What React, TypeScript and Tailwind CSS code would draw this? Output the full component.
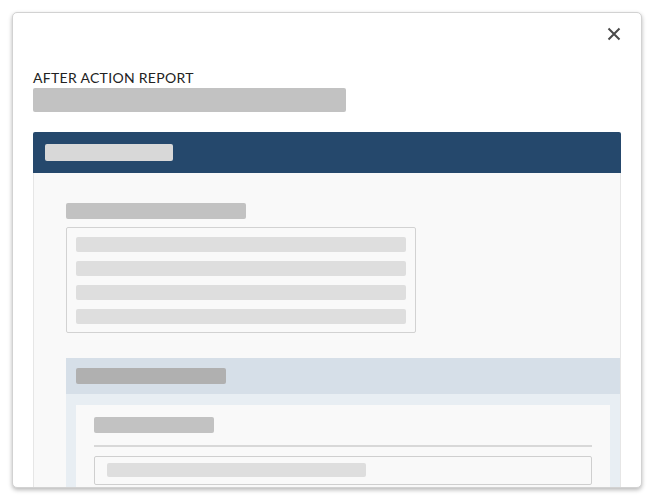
import React from "react";

export default function App() {
  return (
    <div className="w-[655px] h-[498px] bg-white pt-[12px] pl-[12px]" style={{ fontFamily: "Lato, 'Noto Sans', sans-serif" }}>
      <div className="relative w-[630px] h-[476px] rounded-[5px] border border-[#d2d2d2] bg-white shadow-[0_2px_4px_rgba(0,0,0,0.28)] overflow-hidden">
        <button className="absolute top-[13px] right-[19px] w-[16px] h-[16px] flex items-center justify-center">
          <svg width="14" height="14" viewBox="0 0 14 14">
            <path d="M1.5 1.5 L12.5 12.5 M12.5 1.5 L1.5 12.5" stroke="#4a4a4a" strokeWidth="2" strokeLinecap="butt" />
          </svg>
        </button>
        <div className="px-[20px] pt-[56px]">
          <div className="text-[14px] leading-[18px] tracking-[0.3px] text-[#222]">AFTER ACTION REPORT</div>
          <div className="mt-[1px] w-[313px] h-[24px] rounded-[2px] bg-[#c2c2c2]" />
          <div className="mt-[20px] w-[588px]">
            <div className="h-[41px] bg-[#25486c] rounded-t-[2px] pl-[12px] pt-[12px]">
              <div className="w-[128px] h-[17px] rounded-[2px] bg-[#d8d8d8]" />
            </div>
            <div className="bg-[#f9f9f9] border-x border-[#e6e6e6] pl-[32px] pt-[30px] h-[400px]">
              <div className="w-[180px] h-[16px] rounded-[2px] bg-[#c2c2c2]" />
              <div className="mt-[8px] w-[350px] h-[106px] rounded-[2px] border border-[#d2d2d2] px-[9px] pt-[9px] flex flex-col gap-[9px]">
                <div className="h-[15px] rounded-[2px] bg-[#dedede]" />
                <div className="h-[15px] rounded-[2px] bg-[#dedede]" />
                <div className="h-[15px] rounded-[2px] bg-[#dedede]" />
                <div className="h-[15px] rounded-[2px] bg-[#dedede]" />
              </div>
              <div className="mt-[25px]">
                <div className="h-[36px] bg-[#d6dfe8] pl-[10px] pt-[10px]">
                  <div className="w-[150px] h-[16px] rounded-[2px] bg-[#b0b0b0]" />
                </div>
                <div className="bg-[#e8eef3] px-[10px] pt-[11px] h-[120px]">
                  <div className="bg-[#f9f9f9] px-[18px] pt-[12px] h-[110px]">
                    <div className="w-[120px] h-[16px] rounded-[2px] bg-[#c2c2c2]" />
                    <div className="mt-[12px] h-[2px] bg-[#d8d8d8]" />
                    <div className="mt-[9px] h-[29px] rounded-[2px] border border-[#cfcfcf] pl-[12px] pt-[6px]">
                      <div className="w-[259px] h-[14px] rounded-[2px] bg-[#dedede]" />
                    </div>
                  </div>
                </div>
              </div>
            </div>
          </div>
        </div>
      </div>
    </div>
  );
}
